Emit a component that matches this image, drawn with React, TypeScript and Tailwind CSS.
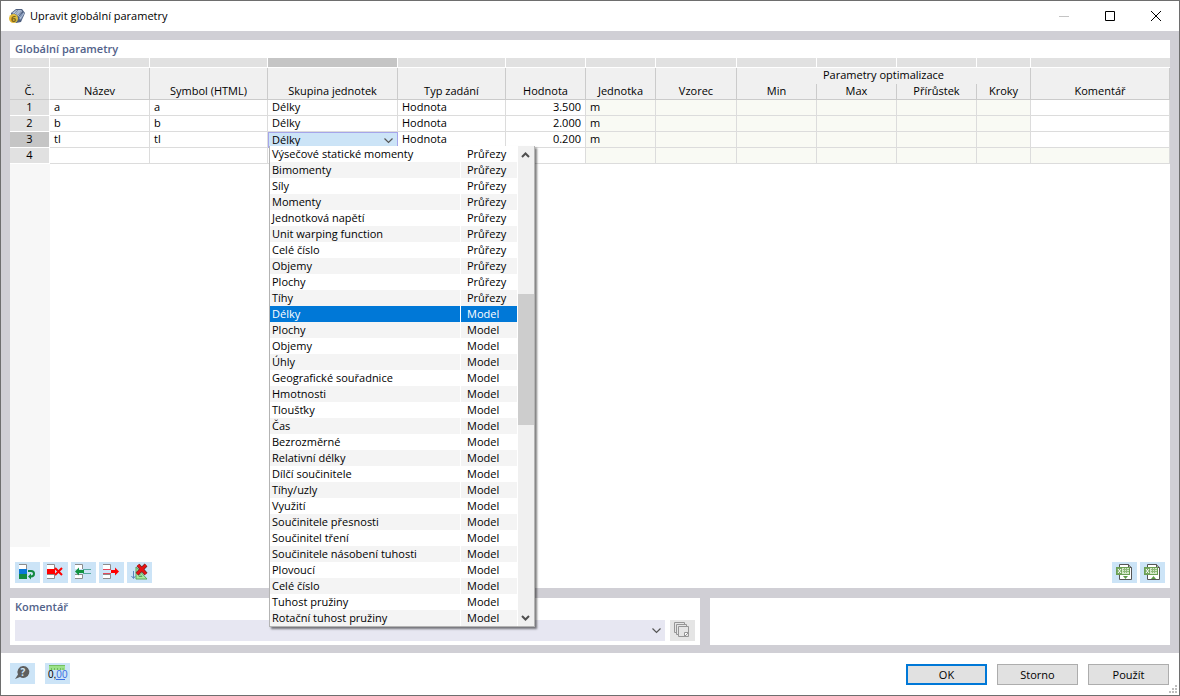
import { useState, type ReactNode } from 'react'

const columns = [
  { name: 'Název', width: 'w-[100px]' },
  { name: 'Symbol (HTML)', width: 'w-[118px]' },
  { name: 'Skupina jednotek', width: 'w-[130px]' },
  { name: 'Typ zadání', width: 'w-[108px]' },
  { name: 'Hodnota', width: 'w-[80px]' },
  { name: 'Jednotka', width: 'w-[70px]' },
  { name: 'Vzorec', width: 'w-[81px]' },
  { name: 'Min', width: 'w-[80px]' },
  { name: 'Max', width: 'w-[80px]' },
  { name: 'Přírůstek', width: 'w-[80px]' },
  { name: 'Kroky', width: 'w-[54px]' },
  { name: 'Komentář', width: '' },
]

const rows = [
  { id: 1, name: 'a', symbol: 'a', group: 'Délky', type: 'Hodnota', value: '3.500', unit: 'm' },
  { id: 2, name: 'b', symbol: 'b', group: 'Délky', type: 'Hodnota', value: '2.000', unit: 'm' },
  { id: 3, name: 'tl', symbol: 'tl', group: 'Délky', type: 'Hodnota', value: '0.200', unit: 'm' },
  { id: 4, name: '', symbol: '', group: '', type: '', value: '', unit: '' },
]

const sectionUnits = [
  'Výsečové statické momenty',
  'Bimomenty',
  'Síly',
  'Momenty',
  'Jednotková napětí',
  'Unit warping function',
  'Celé číslo',
  'Objemy',
  'Plochy',
  'Tíhy',
]

const modelUnits = [
  'Délky',
  'Plochy',
  'Objemy',
  'Úhly',
  'Geografické souřadnice',
  'Hmotnosti',
  'Tloušťky',
  'Čas',
  'Bezrozměrné',
  'Relativní délky',
  'Dílčí součinitele',
  'Tíhy/uzly',
  'Využití',
  'Součinitele přesnosti',
  'Součinitel tření',
  'Součinitele násobení tuhosti',
  'Plovoucí',
  'Celé číslo',
  'Tuhost pružiny',
  'Rotační tuhost pružiny',
]

const unitOptions = [
  ...sectionUnits.map((name) => ({ name, area: 'Průřezy' })),
  ...modelUnits.map((name) => ({ name, area: 'Model' })),
]

function AppIcon() {
  return (
    <svg width="16" height="16" viewBox="0 0 16 16" aria-hidden="true">
      <path d="M2 5 7 1l6 0 3 4-4 9-5 1-5-5z" fill="#4f6080" />
      <path d="M3 5 7 2l2 0-4 4zM10 2l3 0-4 5-2-1z" fill="#a9b9d2" />
      <path d="m11 7 4-3 0 2-3 6-2-1z" fill="#7c90b2" />
      <path d="m5 7 5-5M9 8l4-5M11 11l4-6M5 4l7 6" stroke="#c9d4e6" strokeWidth="0.700" fill="none" />
      <circle cx="4.500" cy="10.500" r="4.500" fill="#e3bd3e" />
      <text x="4.500" y="14" textAnchor="middle" fill="#7a6118" className="font-['Open_Sans'] text-[9px] font-bold">
        6
      </text>
    </svg>
  )
}

// empty record column shared by the row icons
function Record() {
  return (
    <g fill="#fff" stroke="#8c8c8c">
      <path d="M4 2.500h7.500v5H4M4 12.500h7.500v4H4M4 7.500h7.500v5H4" />
    </g>
  )
}

function RowAppendIcon() {
  return (
    <svg width="25" height="21" viewBox="0 0 25 21" aria-hidden="true">
      <Record />
      <rect x="4" y="7" width="8" height="5" fill="#0a78d6" />
      <rect x="4" y="12" width="8" height="5" fill="#128a40" />
      <path d="M13 9h3c4 0 4 5.500 0 5.500h-1" stroke="#128a40" strokeWidth="2" fill="none" />
      <path d="m13 14.500 3-3v6z" fill="#128a40" />
    </svg>
  )
}

function RowDeleteIcon() {
  return (
    <svg width="25" height="21" viewBox="0 0 25 21" aria-hidden="true">
      <Record />
      <rect x="4" y="7" width="8" height="5" fill="#f00" />
      <path d="m12 6 7 7M19 6l-7 7" stroke="#f00" strokeWidth="2" />
    </svg>
  )
}

function RowInsertIcon() {
  return (
    <svg width="25" height="21" viewBox="0 0 25 21" aria-hidden="true">
      <Record />
      <path d="M3 7h9v5H3z" fill="#cce4f7" />
      <path d="M12 7.500h8M12 11.500h8" stroke="#58aaa0" />
      <path d="M4 9.500 8 5.500V8h5v3H8v2.500z" fill="#119340" />
    </svg>
  )
}

function RowRemoveIcon() {
  return (
    <svg width="25" height="21" viewBox="0 0 25 21" aria-hidden="true">
      <Record />
      <path d="M3 7h9v5H3z" fill="#cce4f7" />
      <path d="M4 7.500h8M4 11.500h8" stroke="#e4485c" />
      <path d="m20 9.500-4-4V8h-4v3h4v2.500z" fill="#f00" />
    </svg>
  )
}

function ClearAllIcon() {
  return (
    <svg width="25" height="21" viewBox="0 0 25 21" aria-hidden="true">
      <path d="M9 5v12h11z" fill="#a8eba0" stroke="#5aa55a" />
      <path d="M12 11.500v3h3z" fill="#cce4f7" stroke="#5aa55a" />
      <path d="M6.500 9v7M4.500 14l2 2.500 2-2.500" stroke="#5a86bd" fill="none" />
      <path d="m11 3 8 9M19 3l-9 9" stroke="#6b3030" strokeWidth="4" />
      <path d="m11 3 8 9M19 3l-9 9" stroke="#e81212" strokeWidth="2.500" />
    </svg>
  )
}

function ExcelIcon({ up = false }: { up?: boolean }) {
  return (
    <svg width="25" height="21" viewBox="0 0 25 21" aria-hidden="true">
      <path d="M7.500 2.500h9l3 3v12h-12z" fill="#fff" stroke="#555" />
      <path d="M16.500 2.500v3h3" fill="#aaa" stroke="#555" />
      <rect x="4.500" y="5.500" width="13" height="7" fill="#d5e8cb" stroke="#6ba054" />
      <rect x="5" y="6" width="5" height="6" fill="#75a75f" />
      <path d="m6 7 3 4M9 7l-3 4" stroke="#fff" />
      <path d="M11 7.500h6M11 9.500h6M12.500 6v5M14.500 6v5" stroke="#8fb97c" />
      {up ? <path d="m11 17 2.500-3 2.500 3z" fill="#5d9a48" /> : <path d="m11 14 2.500 3 2.500-3z" fill="#5d9a48" />}
    </svg>
  )
}

function CopyIcon() {
  return (
    <svg width="25" height="21" viewBox="0 0 25 21" aria-hidden="true">
      <g fill="#e5e5e5" stroke="#969696">
        <path d="M4.500 2.500h10v10h-10z" />
        <path d="M6.500 4.500h10v10h-10z" />
        <path d="M8.500 6.500h10v10h-10z" />
        <path d="M14.500 16.500v-4h4z" fill="#fff" />
      </g>
    </svg>
  )
}

function HelpIcon() {
  return (
    <svg width="25" height="21" viewBox="0 0 25 21" aria-hidden="true">
      <path d="M13 3a6 6 0 1 1-3 11l-5 2 3-4.500A6 6 0 0 1 13 3z" fill="#5e5e5e" />
      <text x="13" y="13" textAnchor="middle" fill="#cce4f7" className="font-['Open_Sans'] text-[10px] font-bold">
        ?
      </text>
    </svg>
  )
}

function UnitsIcon() {
  return (
    <svg width="25" height="21" viewBox="0 0 25 21" aria-hidden="true">
      <rect x="4" y="2" width="16" height="5" fill="#9be289" />
      <path d="M6.500 5v2M9.500 5v2M12.500 5v2M15.500 5v2M18 5v2" stroke="#6fb860" />
      <path d="M4 2.500h16" stroke="#74c060" />
      <text x="3" y="15" className="font-['Liberation_Sans'] text-[10px]">
        0,<tspan fill="#3b6fe0">00</tspan>
      </text>
      <path d="M11 16.500h9" stroke="#3b6fe0" />
    </svg>
  )
}

function Chevron({ className = '' }: { className?: string }) {
  return (
    <svg width="9" height="6" viewBox="0 0 9 6" className={className} aria-hidden="true">
      <path d="m.5.5 4 4 4-4" fill="none" stroke="#555" strokeWidth="1.200" />
    </svg>
  )
}

function ToolButton({ label, disabled, children }: { label: string; disabled?: boolean; children: ReactNode }) {
  return (
    <button
      type="button"
      aria-label={label}
      disabled={disabled}
      className={`h-[21px] w-[25px] shrink-0 ${disabled ? 'bg-[#e5e5e5]' : 'bg-[#cce4f7] hover:bg-[#b5d8f3]'}`}
    >
      {children}
    </button>
  )
}

function UnitPopup({ selected, onSelect }: { selected: number; onSelect: (index: number) => void }) {
  return (
    <div className="absolute top-[14px] left-px z-10 flex w-[266px] border-x border-b border-[#b4b4b4] bg-white shadow-[2px_2px_2px_rgba(0,0,0,0.5)]">
      <ul role="listbox" aria-label="Skupina jednotek" className="flex-1">
        {unitOptions.map((option, index) => {
          const background = index === selected ? 'bg-[#0078d7] text-white' : index % 2 ? 'bg-[#f4f4f4]' : 'bg-white'
          return (
            <li
              key={index}
              role="option"
              aria-selected={index === selected}
              onClick={() => onSelect(index)}
              className="flex h-4 gap-px leading-4 whitespace-nowrap"
            >
              <span className={`w-[190px] pl-0.5 ${background}`}>{option.name}</span>
              <span className={`w-14 pl-1.5 ${background}`}>{option.area}</span>
            </li>
          )
        })}
      </ul>
      <div className="flex w-4 flex-col items-center bg-[#f0f0f0]">
        <svg width="16" height="17" viewBox="0 0 16 17" aria-hidden="true">
          <path d="m4 11 3.500-3.500L11 11" fill="none" stroke="#505050" strokeWidth="2" />
        </svg>
        <div className="mt-[131px] h-[131px] w-full bg-[#cdcdcd]" />
        <svg width="16" height="17" viewBox="0 0 16 17" className="mt-auto" aria-hidden="true">
          <path d="m4 7 3.500 3.500L11 7" fill="none" stroke="#505050" strokeWidth="2" />
        </svg>
      </div>
    </div>
  )
}

function ParameterTable() {
  const [selected, setSelected] = useState(10)

  const head = 'border-r border-b border-[#cbcbcb] bg-[#f0f0f0] px-0 pt-0 pb-0.5 align-bottom font-normal'
  const cell = 'border-r border-b border-[#dcdcdc] px-1 pt-0 pb-0.5'
  const locked = `${cell} bg-[#f9faf4]`

  return (
    <table className="w-full table-fixed border-separate border-spacing-0 leading-[13px] whitespace-nowrap">
      <colgroup>
        <col className="w-10" />
        {columns.map((column) => (
          <col key={column.name} className={column.width} />
        ))}
      </colgroup>
      <thead>
        <tr className="h-[10px]">
          <td className="border-r border-b border-white bg-[#e1e1e1] p-0" />
          {columns.map((column, index) => (
            <td
              key={column.name}
              className={`border-b border-white p-0 ${index < 11 ? 'border-r' : ''} ${index === 2 ? 'bg-[#c5c5c5]' : 'bg-[#e1e1e1]'}`}
            />
          ))}
        </tr>
        <tr className="h-4">
          <th
            rowSpan={2}
            className="border-r border-b border-r-white border-b-[#cbcbcb] bg-[#e1e1e1] px-0 pt-0 pb-0.5 align-bottom font-normal"
          >
            Č.
          </th>
          {columns.slice(0, 7).map((column) => (
            <th key={column.name} rowSpan={2} className={head}>
              {column.name}
            </th>
          ))}
          <th colSpan={4} className="border-r border-[#cbcbcb] bg-[#f0f0f0] px-0 pt-0 pb-[3px] font-normal">
            Parametry optimalizace
          </th>
          <th rowSpan={2} className={head}>
            Komentář
          </th>
        </tr>
        <tr className="h-4">
          {columns.slice(7, 11).map((column) => (
            <th key={column.name} className={head}>
              {column.name}
            </th>
          ))}
        </tr>
      </thead>
      <tbody>
        {rows.map((row) => (
          <tr key={row.id} className="h-4">
            <th
              scope="row"
              className={`border-r border-b border-white px-0 pt-0 pb-0.5 font-normal ${row.id === 3 ? 'bg-[#c5c5c5]' : 'bg-[#e1e1e1]'}`}
            >
              {row.id}
            </th>
            <td className={cell}>{row.name}</td>
            <td className={cell}>{row.symbol}</td>
            {row.id === 3 ? (
              <td className="relative border-r border-b border-[#a5a5ea] p-0">
                <select
                  aria-label="Skupina jednotek"
                  value={selected}
                  onChange={(e) => setSelected(Number(e.target.value))}
                  className="block h-[15px] w-full appearance-none border-t border-l border-[#a5a5ea] bg-[#cce4f7] pl-[3px] leading-[14px] outline-none"
                >
                  {unitOptions.map((option, index) => (
                    <option key={index} value={index}>
                      {option.name}
                    </option>
                  ))}
                </select>
                <Chevron className="pointer-events-none absolute top-1.5 right-1" />
                <UnitPopup selected={selected} onSelect={setSelected} />
              </td>
            ) : (
              <td className={cell}>{row.group}</td>
            )}
            <td className={cell}>{row.type}</td>
            <td className={`${cell} text-right`}>{row.value}</td>
            <td className={locked}>{row.unit}</td>
            <td className={locked} />
            <td className={locked} />
            <td className={locked} />
            <td className={locked} />
            <td className={locked} />
            <td className={row.id === 4 ? locked : cell} />
          </tr>
        ))}
      </tbody>
    </table>
  )
}

function TitleBar() {
  return (
    <header className="flex h-[30px] items-center bg-white pl-2">
      <AppIcon />
      <h1 className="ml-[5px] flex-1">Upravit globální parametry</h1>
      <button type="button" aria-label="Minimalizovat" disabled className="flex h-full w-[46px] items-center justify-center">
        <svg width="10" height="10" viewBox="0 0 10 10">
          <path d="M0 5.500h10" stroke="#c4c4c4" />
        </svg>
      </button>
      <button type="button" aria-label="Maximalizovat" className="flex h-full w-[46px] items-center justify-center">
        <svg width="10" height="10" viewBox="0 0 10 10">
          <path d="M.5.5h9v9h-9z" fill="none" stroke="#000" />
        </svg>
      </button>
      <button type="button" aria-label="Zavřít" className="flex h-full w-[46px] items-center justify-center">
        <svg width="10" height="10" viewBox="0 0 10 10">
          <path d="m0 0 10 10M10 0 0 10" stroke="#000" />
        </svg>
      </button>
    </header>
  )
}

export default function App() {
  const button = 'h-[21px] w-[81px] bg-[#e1e1e1] pt-px text-center leading-4'

  return (
    <div className="flex min-h-screen flex-col border border-[#6e6e6e] bg-white font-['Open_Sans','Noto_Sans',sans-serif] text-[11px] text-black">
      <TitleBar />

      <main className="flex flex-1 flex-col gap-2.5 bg-[#d0cfd5] px-[9px] pt-[9px] pb-2">
        <section className="flex flex-1 flex-col bg-white">
          <h2 className="h-[18px] pl-[5px] leading-[18px] font-semibold text-[#52628a]">Globální parametry</h2>
          <ParameterTable />
          <div className="w-10 flex-1 bg-[#f7f7f7]" />
          <div className="mt-[15px] mb-[5px] flex gap-[3px] px-[5px]">
            <ToolButton label="Přidat řádek">
              <RowAppendIcon />
            </ToolButton>
            <ToolButton label="Smazat řádek">
              <RowDeleteIcon />
            </ToolButton>
            <ToolButton label="Vložit řádek">
              <RowInsertIcon />
            </ToolButton>
            <ToolButton label="Odebrat řádek">
              <RowRemoveIcon />
            </ToolButton>
            <ToolButton label="Smazat vše">
              <ClearAllIcon />
            </ToolButton>
            <div className="flex-1" />
            <ToolButton label="Export do Excelu">
              <ExcelIcon />
            </ToolButton>
            <ToolButton label="Import z Excelu">
              <ExcelIcon up />
            </ToolButton>
          </div>
        </section>

        <div className="grid grid-cols-[3fr_2fr] gap-2.5">
          <section className="bg-white px-[5px] pb-1">
            <label htmlFor="comment" className="block h-[22px] leading-[18px] font-semibold text-[#52628a]">
              Komentář
            </label>
            <div className="flex gap-[5px]">
              <div className="relative flex-1">
                <select id="comment" className="block h-[21px] w-full appearance-none bg-[#e7e7f2] px-1 outline-none">
                  <option></option>
                </select>
                <Chevron className="pointer-events-none absolute top-2 right-1" />
              </div>
              <ToolButton label="Kopírovat komentář" disabled>
                <CopyIcon />
              </ToolButton>
            </div>
          </section>
          <section className="bg-white" />
        </div>
      </main>

      <footer className="relative flex h-[42px] items-start justify-between pt-2.5 pr-2.5 pl-[9px]">
        <div className="flex gap-2.5">
          <ToolButton label="Nápověda">
            <HelpIcon />
          </ToolButton>
          <ToolButton label="Jednotky a desetinná místa">
            <UnitsIcon />
          </ToolButton>
        </div>
        <div className="flex gap-2.5 pt-px">
          <button type="button" className={`${button} border-2 border-[#0078d7]`}>
            OK
          </button>
          <button type="button" className={`${button} border border-[#adadad]`}>
            Storno
          </button>
          <button type="button" className={`${button} border border-[#adadad]`}>
            Použít
          </button>
        </div>
        <svg width="8" height="8" viewBox="0 0 8 8" className="absolute right-0.5 bottom-0.5" aria-hidden="true">
          <path d="M6 0h2v2H6zM6 3h2v2H6zM3 3h2v2H3zM6 6h2v2H6zM3 6h2v2H3zM0 6h2v2H0z" fill="#bfbfbf" />
        </svg>
      </footer>
    </div>
  )
}
